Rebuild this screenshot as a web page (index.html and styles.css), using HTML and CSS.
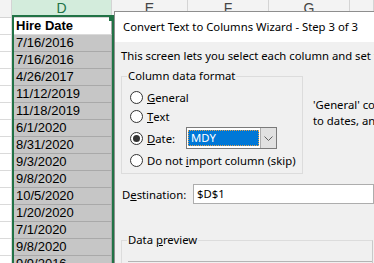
FILE: index.html
```html
<!DOCTYPE html>
<html lang="en">
<head>
	<meta charset="UTF-8">
	<link rel="stylesheet" href="styles.css">
	<title>Convert Text to Columns</title>
</head>
<body>
<div class="sheet">
	<div class="heads">
		<div class="h c-c"></div>
		<div class="h c-d on">D</div>
		<div class="h c-e">E</div>
		<div class="h c-f">F</div>
		<div class="h c-g">G</div>
		<div class="h c-x"></div>
	</div>
	<div class="row"><div class="cell c-c"></div><div class="cell c-d first">Hire Date</div><div class="cell c-x"></div></div>
	<div class="row"><div class="cell c-c"></div><div class="cell c-d">7/16/2016</div><div class="cell c-x"></div></div>
	<div class="row"><div class="cell c-c"></div><div class="cell c-d">7/16/2016</div><div class="cell c-x"></div></div>
	<div class="row"><div class="cell c-c"></div><div class="cell c-d">4/26/2017</div><div class="cell c-x"></div></div>
	<div class="row"><div class="cell c-c"></div><div class="cell c-d">11/12/2019</div><div class="cell c-x"></div></div>
	<div class="row"><div class="cell c-c"></div><div class="cell c-d">11/18/2019</div><div class="cell c-x"></div></div>
	<div class="row"><div class="cell c-c"></div><div class="cell c-d">6/1/2020</div><div class="cell c-x"></div></div>
	<div class="row"><div class="cell c-c"></div><div class="cell c-d">8/31/2020</div><div class="cell c-x"></div></div>
	<div class="row"><div class="cell c-c"></div><div class="cell c-d">9/3/2020</div><div class="cell c-x"></div></div>
	<div class="row"><div class="cell c-c"></div><div class="cell c-d">9/8/2020</div><div class="cell c-x"></div></div>
	<div class="row"><div class="cell c-c"></div><div class="cell c-d">10/5/2020</div><div class="cell c-x"></div></div>
	<div class="row"><div class="cell c-c"></div><div class="cell c-d">1/20/2020</div><div class="cell c-x"></div></div>
	<div class="row"><div class="cell c-c"></div><div class="cell c-d">7/1/2020</div><div class="cell c-x"></div></div>
	<div class="row"><div class="cell c-c"></div><div class="cell c-d">9/8/2020</div><div class="cell c-x"></div></div>
	<div class="row"><div class="cell c-c"></div><div class="cell c-d">9/9/2016</div><div class="cell c-x"></div></div>
	<div class="selection"><span class="handle"></span></div>
</div>

<div class="dialog">
	<div class="titlebar">Convert Text to Columns Wizard - Step 3 of 3</div>
	<div class="dlg-body">
		<p class="intro">This screen lets you select each column and set the Data Format.</p>
		<div class="format-row">
			<div class="group format">
				<div class="legend">Column data format</div>
				<div class="radio r1"><span class="dot"></span><u>G</u>eneral</div>
				<div class="radio r2"><span class="dot"></span><u>T</u>ext</div>
				<div class="radio r3"><span class="dot on"></span><span class="lbl"><u>D</u>ate:</span>
					<span class="combo">
						<span class="combo-field"><span class="combo-sel">MDY</span></span>
						<span class="combo-btn">
							<svg width="9" height="5" viewBox="0 0 9 5"><path d="M0.5 0.5 L4.5 4.5 L8.5 0.5" fill="none" stroke="#606060" stroke-width="1"/></svg>
						</span>
					</span>
				</div>
				<div class="radio r4"><span class="dot"></span>Do not&nbsp;<u>i</u>mport column (skip)</div>
			</div>
			<p class="note">'General' converts numeric values to numbers, date values<br>to dates, and all remaining values to text.</p>
		</div>
		<div class="dest">
			<span class="dest-lbl">D<u>e</u>stination:</span>
			<span class="dest-input">$D$1</span>
		</div>
		<div class="group preview">
			<div class="legend">Data <u>p</u>review</div>
			<div class="preview-box"></div>
		</div>
	</div>
</div>
</body>
</html>
```

FILE: styles.css
```css
body{
	margin: 0;
	width: 374px;
	height: 263px;
	overflow: hidden;
	position: relative;
	background: #fff;
	font-family: "Liberation Sans", Arial, sans-serif;
}
/* sheet */
.sheet{
	position: relative;
	font-size: 13px;
	color: #000;
}
.heads{
	display: flex;
	height: 18px;
	box-sizing: border-box;
	border-bottom: 1px solid #d4d4d4;
	background: #f3f3f3;
}
.h{
	box-sizing: border-box;
	border-right: 1px solid #d4d4d4;
	text-align: center;
	font-size: 14px;
	line-height: 17px;
	color: #444;
}
.c-c{ width: 12px; }
.c-d{ width: 100px; }
.c-e{ width: 76px; }
.c-f{ width: 81px; }
.c-g{ width: 81px; }
.c-x{ flex: 1; }
.h.on{
	background: #d3ecdc;
	color: #217346;
}
.row{
	display: flex;
	height: 17px;
}
.cell{
	box-sizing: border-box;
	height: 17px;
	border-right: 1px solid #dadada;
	border-bottom: 1px solid #dadada;
}
.row .c-d{
	padding-left: 4px;
	line-height: 16px;
	white-space: nowrap;
	overflow: hidden;
	background: #c6c6c6;
	border-bottom-color: #a9a9a9;
	border-right-color: #a9a9a9;
}
.row .c-d.first{
	background: #fff;
	font-weight: bold;
	border-bottom-color: #dadada;
}
.selection{
	position: absolute;
	left: 12px;
	top: 15px;
	width: 102px;
	height: 270px;
	box-sizing: border-box;
	border: 2px solid #217346;
	pointer-events: none;
}
.handle{
	position: absolute;
	left: 95px;
	top: 0;
	width: 4px;
	height: 4px;
	background: #217346;
}
/* dialog */
.dialog{
	position: absolute;
	left: 114px;
	top: 11px;
	width: 320px;
	height: 280px;
	border: 1px solid #8e8e8e;
	background: #f0f0f0;
	font-family: "Noto Sans", "Open Sans", sans-serif;
	font-size: 11.3px;
	color: #000;
}
.titlebar{
	height: 30px;
	line-height: 30px;
	padding-left: 8px;
	background: #fff;
	white-space: nowrap;
}
.dlg-body{
	padding-left: 6px;
}
.intro{
	margin: 6px 0 0;
	line-height: 16px;
	white-space: nowrap;
}
.format-row{
	display: flex;
	align-items: flex-start;
	gap: 10px;
	margin-top: 12px;
}
.group{
	box-sizing: border-box;
	border: 1px solid #dcdcdc;
}
.legend{
	display: table;
	margin: -9px 0 0 5px;
	padding: 0 1px;
	line-height: 16px;
	background: #f0f0f0;
}
.format{
	flex: none;
	width: 182px;
	height: 98px;
}
.radio{
	display: flex;
	align-items: center;
	padding-left: 8px;
	white-space: nowrap;
}
.r1{ height: 19px; margin-top: 4px; }
.r2{ height: 19px; }
.r3{ height: 24px; }
.r4{ height: 21px; }
.dot{
	flex: none;
	position: relative;
	width: 13px;
	height: 13px;
	box-sizing: border-box;
	margin-right: 4px;
	border: 1px solid #333;
	border-radius: 50%;
	background: #fff;
}
.dot.on:after{
	content: "";
	position: absolute;
	left: 2px;
	top: 2px;
	width: 7px;
	height: 7px;
	border-radius: 50%;
	background: #333;
}
.lbl{
	width: 39px;
}
.combo{
	display: flex;
	width: 91px;
	height: 22px;
	box-sizing: border-box;
	border: 1px solid #7a7a7a;
	background: #fff;
}
.combo-field{
	width: 73px;
	padding: 2px 1px 2px 1px;
	box-sizing: border-box;
}
.combo-sel{
	display: block;
	height: 16px;
	line-height: 16px;
	padding-left: 3px;
	background: #0078d7;
	color: #fff;
	outline: 1px dotted #e0a050;
	outline-offset: -1px;
}
.combo-btn{
	flex: 1;
	display: flex;
	align-items: center;
	justify-content: center;
	background: #e1e1e1;
	border-left: 1px solid #adadad;
}
.note{
	margin: 21px 0 0;
	line-height: 16px;
	white-space: nowrap;
}
.dest{
	display: flex;
	align-items: center;
	height: 20px;
	margin-top: 10px;
}
.dest-lbl{
	padding-left: 1px;
	box-sizing: border-box;
	width: 72px;
}
.dest-input{
	width: 181px;
	height: 20px;
	box-sizing: border-box;
	padding-left: 3px;
	line-height: 18px;
	border: 1px solid #adadad;
	background: #fff;
}
.preview{
	width: 252px;
	height: 60px;
	margin-top: 36px;
	border-right-color: #c8c8c8;
}
.preview-box{
	margin: 13px 0 0 6px;
	border-top: 1px solid #b4b4b4;
}
```
